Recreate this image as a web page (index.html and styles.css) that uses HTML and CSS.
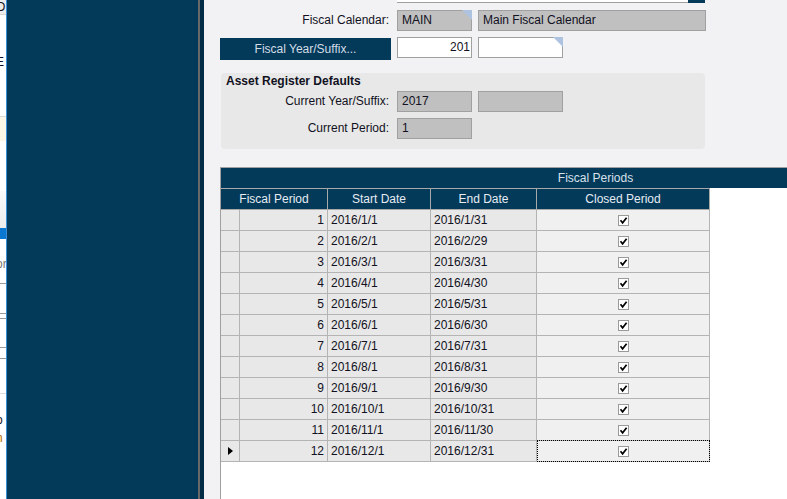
FILE: index.html
```html
<!DOCTYPE html>
<html>
<head>
    <meta charset="utf-8">
    <title>Fiscal Periods</title>
    <link rel="stylesheet" href="styles.css">
</head>
<body>
<div class="app">
    <div class="edge">
        <div class="edge-tab">O</div>
        <div class="edge-gap" style="height: 40px"></div>
        <div class="edge-text">E</div>
        <div class="edge-gap" style="height: 47px"></div>
        <div class="edge-note"></div>
        <div class="edge-gap" style="height: 36px"></div>
        <div class="edge-text orange">t</div>
        <div class="edge-shade"></div>
        <div class="edge-bar"></div>
        <div class="edge-gap" style="height: 18px"></div>
        <div class="edge-text grey">or</div>
        <div class="edge-gap" style="height: 12px"></div>
        <div class="edge-line"></div>
        <div class="edge-gap" style="height: 29px"></div>
        <div class="edge-line"></div>
        <div class="edge-gap" style="height: 4px"></div>
        <div class="edge-line"></div>
        <div class="edge-gap" style="height: 28px"></div>
        <div class="edge-line"></div>
        <div class="edge-gap" style="height: 10px"></div>
        <div class="edge-line"></div>
        <div class="edge-gap" style="height: 34px"></div>
        <div class="edge-line light"></div>
        <div class="edge-gap" style="height: 19px"></div>
        <div class="edge-text">o</div>
        <div class="edge-gap" style="height: 4px"></div>
        <div class="edge-text orange">h</div>
    </div>

    <div class="sidebar"></div>
    <div class="splitter"></div>

    <div class="main">
        <div class="top-field"><span class="top-input"></span><span class="top-drop"></span></div>

        <div class="form-row">
            <span class="field-label">Fiscal Calendar:</span>
            <div class="field ro corner">MAIN</div>
            <div class="field ro">Main Fiscal Calendar</div>
        </div>

        <div class="form-row year-row">
            <button class="lookup-btn">Fiscal Year/Suffix...</button>
            <div class="field edit num">201</div>
            <div class="field edit corner"></div>
        </div>

        <div class="group">
            <div class="group-title">Asset Register Defaults</div>
            <div class="group-row">
                <span class="field-label">Current Year/Suffix:</span>
                <div class="field ro">2017</div>
                <div class="field ro"></div>
            </div>
            <div class="group-row second">
                <span class="field-label">Current Period:</span>
                <div class="field ro">1</div>
            </div>
        </div>

        <div class="grid">
            <div class="grid-caption">Fiscal Periods</div>
            <div class="grid-head">
                <div class="head-cell">Fiscal Period</div>
                <div class="head-cell">Start Date</div>
                <div class="head-cell">End Date</div>
                <div class="head-cell">Closed Period</div>
            </div>
            <div class="js-rows"></div>
        </div>
    </div>
</div>

<script>
const periods = [
    [1, '2016/1/1', '2016/1/31'],
    [2, '2016/2/1', '2016/2/29'],
    [3, '2016/3/1', '2016/3/31'],
    [4, '2016/4/1', '2016/4/30'],
    [5, '2016/5/1', '2016/5/31'],
    [6, '2016/6/1', '2016/6/30'],
    [7, '2016/7/1', '2016/7/31'],
    [8, '2016/8/1', '2016/8/31'],
    [9, '2016/9/1', '2016/9/30'],
    [10, '2016/10/1', '2016/10/31'],
    [11, '2016/11/1', '2016/11/30'],
    [12, '2016/12/1', '2016/12/31']
];

const checkMark = `<span class="check"><svg width="9" height="9" viewBox="0 0 9 9">
    <path d="M1.5 4.2 L3.6 6.8 L7.6 1.8" fill="none" stroke="#000" stroke-width="1.7"/></svg></span>`;

let html = '';
periods.forEach((p, i) => {
    const current = i === periods.length - 1;
    html += `<div class="grid-row">
        <div class="cell selector">${current ? '<svg width="5" height="8" viewBox="0 0 5 8"><path d="M0 0 L5 4 L0 8 Z" fill="#000"/></svg>' : ''}</div>
        <div class="cell num">${p[0]}</div>
        <div class="cell">${p[1]}</div>
        <div class="cell">${p[2]}</div>
        <div class="cell closed${current ? ' focus' : ''}">${checkMark}</div>
    </div>`;
});
document.querySelector('.js-rows').innerHTML = html;
</script>
</body>
</html>
```

FILE: styles.css
```css
body {
    margin: 0;
    font-family: "Liberation Sans", Arial, sans-serif;
    font-size: 12px;
    color: #111122;
    overflow: hidden;
}

.app {
    display: flex;
    width: 787px;
    height: 499px;
}

/* sliver of the window behind */
.edge {
    width: 6px;
    background-color: white;
    display: flex;
    flex-direction: column;
    overflow: hidden;
}

.edge-tab {
    height: 14px;
    line-height: 14px;
    background-color: #ececec;
    border-bottom: 1px solid #d6d6d6;
    margin-left: -4px;
    padding-left: 0;
}

.edge-text {
    height: 14px;
    line-height: 14px;
    margin-left: -4px;
}

.orange {
    color: #b86a00;
}

.grey {
    color: #777;
}

.edge-note {
    height: 24px;
    background-color: #fcf6e6;
    border-top: 1px solid #dcdcdc;
}

.edge-shade {
    height: 37px;
    background: linear-gradient(#fafafa, #ececec);
}

.edge-bar {
    height: 11px;
    background-color: #0a78d0;
}

.edge-line {
    height: 1px;
    background-color: #999;
}

.edge-line.light {
    background-color: #ddd;
}

.sidebar {
    width: 191px;
    border-left: 1px solid #3a8ddb;
    background-color: #033a5a;
}

.splitter {
    width: 4px;
    border-left: 2px solid #686868;
    background-color: #022b45;
}

.main {
    flex: 1;
    display: flex;
    flex-direction: column;
    background-color: #f2f2f4;
    overflow: hidden;
}

.top-field {
    display: flex;
    height: 3px;
    margin-left: 193px;
}

.top-input {
    width: 291px;
    background-color: white;
    border-bottom: 1px solid #a0a0a0;
}

.top-drop {
    width: 17px;
    background-color: #033a5a;
}

.form-row {
    display: grid;
    grid-template-columns: 171px 75px 228px;
    column-gap: 6px;
    align-items: start;
    margin-top: 7px;
    padding-left: 16px;
}

.year-row {
    grid-template-columns: 171px 75px 85px;
    margin-top: 6px;
}

.field-label {
    text-align: right;
    padding-right: 2px;
    line-height: 21px;
}

.field {
    position: relative;
    height: 21px;
    box-sizing: border-box;
    border: 1px solid #a0a0a0;
    line-height: 19px;
    padding: 0 4px;
    white-space: nowrap;
    overflow: visible;
}

.ro {
    background-color: #c0c0c0;
}

.edit {
    background-color: white;
}

.field.num {
    text-align: right;
    padding-right: 1px;
}

.corner::after {
    content: '';
    position: absolute;
    top: -1px;
    right: -1px;
    border-style: solid;
    border-width: 0 10px 10px 0;
    border-color: transparent #aec3e0 transparent transparent;
}

.lookup-btn {
    height: 22px;
    margin-top: 1px;
    border: none;
    background-color: #033a5a;
    color: #d4dde6;
    font-family: inherit;
    font-size: 12px;
    padding: 0;
}

.group {
    margin: 13px 0 0 17px;
    width: 484px;
    height: 76px;
    box-sizing: border-box;
    background-color: #e8e8e8;
    border-radius: 4px;
}

.group-title {
    font-weight: bold;
    line-height: 14px;
    padding: 1px 0 0 5px;
}

.group-row {
    display: grid;
    grid-template-columns: 170px 75px 85px;
    column-gap: 6px;
    margin-top: 3px;
}

.group-row.second {
    margin-top: 6px;
}

.group-row .field {
    line-height: 18px;
}

.grid {
    flex: 1;
    width: 749px;
    margin: 18px 0 0 16px;
    background-color: white;
    border-left: 1px solid #a0a0a0;
    border-top: 1px solid #a0a0a0;
}

.grid-caption {
    height: 20px;
    line-height: 20px;
    background-color: #033a5a;
    color: #d8e1ea;
    text-align: center;
}

.grid-head {
    display: grid;
    grid-template-columns: 107px 103px 106px 173px;
    width: 489px;
    height: 22px;
    box-sizing: border-box;
    background-color: #033a5a;
    border-top: 1px solid #a8a8a8;
    border-bottom: 1px solid #a8a8a8;
}

.head-cell {
    border-right: 1px solid #a8a8a8;
    color: #e6ecf2;
    text-align: center;
    line-height: 20px;
}

.grid-row {
    display: grid;
    grid-template-columns: 19px 88px 103px 106px 173px;
    width: 489px;
    height: 21px;
    box-sizing: border-box;
    border-bottom: 1px solid #b4b4b4;
}

.cell {
    position: relative;
    border-right: 1px solid #b4b4b4;
    background-color: #e8e8e8;
    line-height: 20px;
    padding-left: 3px;
    white-space: nowrap;
}

.cell.num {
    text-align: right;
    padding: 0 3px 0 0;
}

.cell.selector {
    padding: 0;
    display: flex;
    align-items: center;
    justify-content: center;
}

.cell.closed {
    background-color: #f0f0f0;
    padding: 0;
    display: flex;
    align-items: center;
    justify-content: center;
}

.focus::after {
    content: '';
    position: absolute;
    top: -1px;
    left: 0;
    right: -1px;
    bottom: -1px;
    border: 1px dotted #000;
}

.check {
    width: 11px;
    height: 11px;
    box-sizing: border-box;
    border: 1px solid #9a9a9a;
    background-color: white;
    display: flex;
    align-items: center;
    justify-content: center;
}
```
